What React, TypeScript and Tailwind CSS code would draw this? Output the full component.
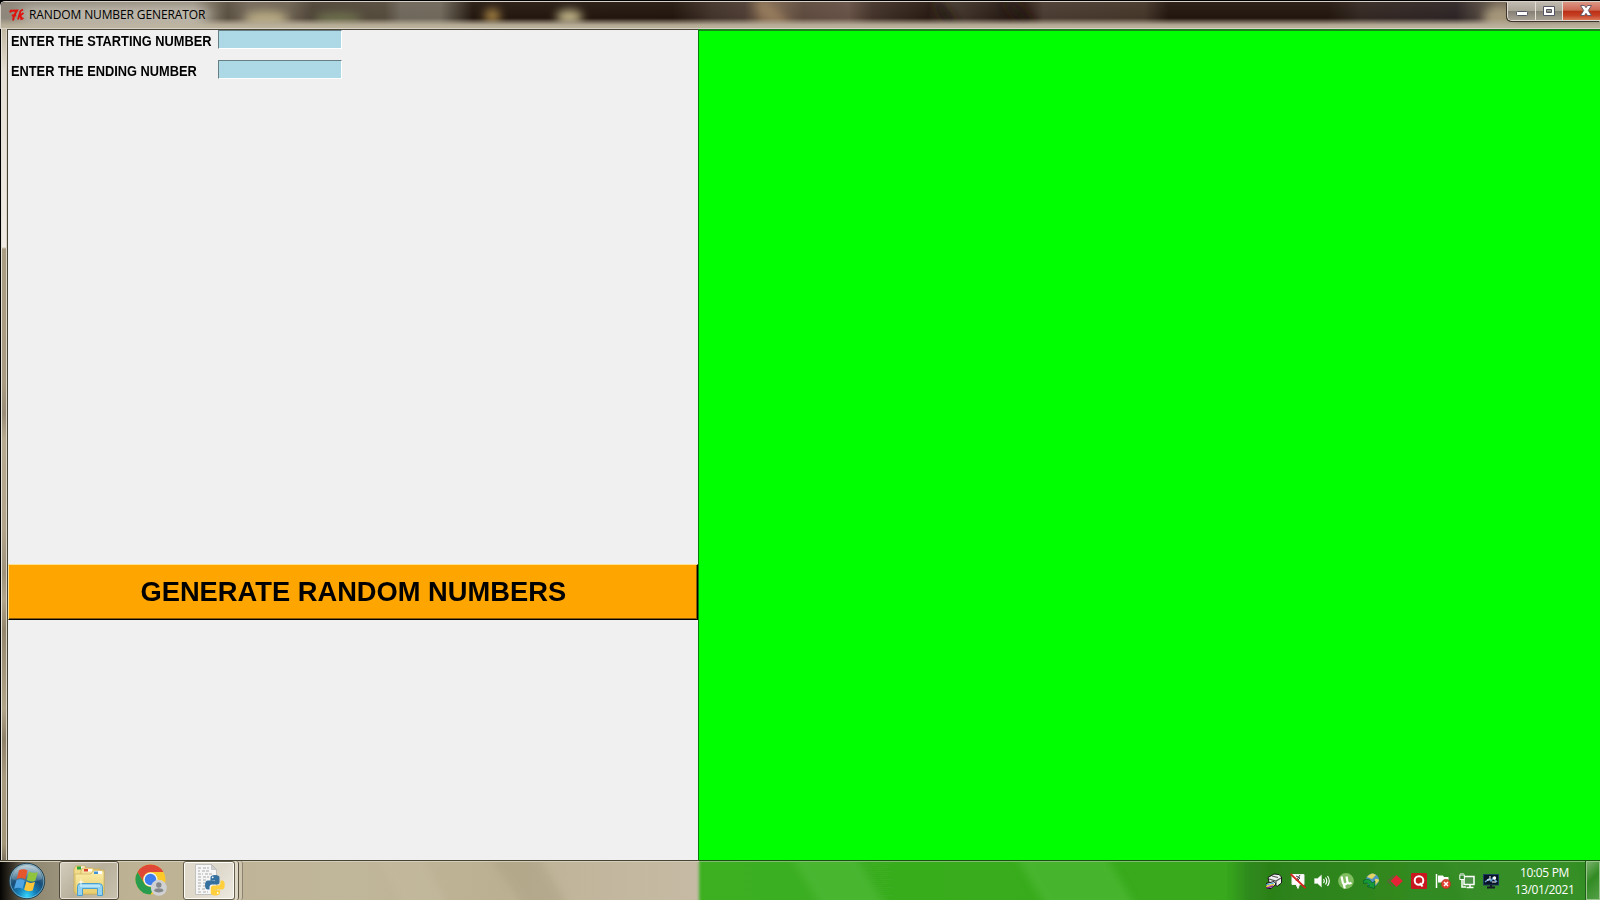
import type { ReactNode } from "react";

function TitleGlass() {
  return (
    <svg className="col-start-1 row-start-1 h-[26px] w-full" viewBox="0 0 1598 26" preserveAspectRatio="none" aria-hidden="true">
      <defs>
        <linearGradient id="glass" x1="0" x2="1598" y1="0" y2="0" gradientUnits="userSpaceOnUse">
          <stop offset="0" stopColor="#8d867a" />
          <stop offset="0.12" stopColor="#968f80" />
          <stop offset="0.132" stopColor="#756b5b" />
          <stop offset="0.142" stopColor="#5a5042" />
          <stop offset="0.155" stopColor="#74695a" />
          <stop offset="0.18" stopColor="#6d6252" />
          <stop offset="0.195" stopColor="#4d4337" />
          <stop offset="0.24" stopColor="#554b3d" />
          <stop offset="0.25" stopColor="#6e675b" />
          <stop offset="0.275" stopColor="#6f685b" />
          <stop offset="0.295" stopColor="#23170f" />
          <stop offset="0.42" stopColor="#21150d" />
          <stop offset="0.445" stopColor="#41322a" />
          <stop offset="0.465" stopColor="#4c3c33" />
          <stop offset="0.476" stopColor="#7a624b" />
          <stop offset="0.487" stopColor="#745e4b" />
          <stop offset="0.502" stopColor="#5d4a3e" />
          <stop offset="0.53" stopColor="#665146" />
          <stop offset="0.545" stopColor="#423229" />
          <stop offset="0.58" stopColor="#281a12" />
          <stop offset="0.592" stopColor="#463a30" />
          <stop offset="0.625" stopColor="#281c16" />
          <stop offset="0.64" stopColor="#2b1b14" />
          <stop offset="0.652" stopColor="#493b31" />
          <stop offset="0.715" stopColor="#443529" />
          <stop offset="0.73" stopColor="#21150e" />
          <stop offset="0.83" stopColor="#21150e" />
          <stop offset="0.85" stopColor="#332722" />
          <stop offset="0.91" stopColor="#2c2425" />
          <stop offset="0.935" stopColor="#6a5d4f" />
          <stop offset="1" stopColor="#8b8170" />
        </linearGradient>
        <linearGradient id="glassFade" x1="0" x2="0" y1="0" y2="1">
          <stop offset="0" stopColor="#b9af99" stopOpacity="0.08" />
          <stop offset="0.62" stopColor="#b9af99" stopOpacity="0" />
          <stop offset="0.88" stopColor="#b9af99" stopOpacity="0.95" />
          <stop offset="1" stopColor="#bdb49e" />
        </linearGradient>
        <filter id="soft" x="-80%" y="-100%" width="260%" height="300%"><feGaussianBlur stdDeviation="5" /></filter>
        <filter id="softWide" x="-20%" y="-100%" width="140%" height="300%"><feGaussianBlur stdDeviation="8 4" /></filter>
      </defs>
      <rect width="1598" height="26" fill="url(#glass)" />
      <g filter="url(#soft)">
        <ellipse cx="265" cy="17" rx="22" ry="8" fill="#b7aa83" />
        <ellipse cx="337" cy="17" rx="24" ry="6" fill="#6f7350" />
        <ellipse cx="491" cy="14" rx="8" ry="7" fill="#a98545" />
        <ellipse cx="568" cy="15" rx="13" ry="7" fill="#c5ba8c" />
        <path d="M752 0h16l20 22h-22z" fill="#957a5b" />
        <path d="M930 0h12l15 22h-15z" fill="#23170f" />
        <path d="M1000 0h15l20 22h-18z" fill="#23150f" />
        <ellipse cx="1498" cy="16" rx="16" ry="12" fill="#a49679" />
      </g>
      <rect width="1598" height="26" fill="url(#glassFade)" />
      <rect x="20" y="4" width="188" height="18" rx="8" fill="#cbc5b9" opacity="0.75" filter="url(#softWide)" />
    </svg>
  );
}

function TkIcon() {
  return (
    <svg className="h-4 w-4 shrink-0" viewBox="0 0 16 16" fill="none" stroke="#e0130d" strokeWidth="2" aria-hidden="true">
      <path d="M1 5.500 1.800 3.800 8 3.500 5 8.500 4 13.500M2.800 8.500h4.400" />
      <path d="M14 2.500 11.500 4 9 12.500M9.500 9.500 14.500 6M11.500 8.500l.8 3.500 2.200-.8" strokeWidth="1.900" />
    </svg>
  );
}

function WindowControls() {
  return (
    <div className="col-start-1 row-start-1 flex h-[19px] w-[93px] self-start justify-self-end rounded-bl-[5px] border-b border-l border-[#ded8ce] shadow-[-1px_1px_0_#3d352d]">
      <button aria-label="Minimize" className="flex w-[28px] items-center justify-center rounded-bl-[4px] border-r border-[#e5dfd4] bg-[linear-gradient(#c1bab0_0%,#aba499_48%,#857e74_50%,#a69f93_100%)]">
        <svg className="h-[18px] w-[14px]" viewBox="0 0 14 18"><rect x="1.500" y="9.500" width="11" height="4" rx="1" fill="#fff" stroke="#565566" /></svg>
      </button>
      <button aria-label="Maximize" className="flex w-[27px] items-center justify-center border-r border-[#e5dfd4] bg-[linear-gradient(#c1bab0_0%,#aba499_48%,#857e74_50%,#a69f93_100%)]">
        <svg className="h-[18px] w-[14px]" viewBox="0 0 14 18"><path fillRule="evenodd" d="M1.500 4.500h11v9h-11zM4.500 7.500v3h5v-3z" fill="#fff" stroke="#565566" /></svg>
      </button>
      <button aria-label="Close" className="flex flex-1 items-center justify-center bg-[linear-gradient(#dc9584_0%,#cd6853_46%,#b92f16_50%,#c64025_75%,#dc7756_100%)] pl-[9px]">
        <svg className="h-[18px] w-[14px] shrink-0" viewBox="0 0 14 18"><path d="M1.500 3.500h4L7 5.700l1.500-2.200h4L9.300 8.500l3.200 5h-4L7 11.300l-1.500 2.200h-4l3.200-5z" fill="#fff" stroke="#5c5060" strokeWidth="0.900" /></svg>
      </button>
    </div>
  );
}

function Field({ label }: { label: string }) {
  return (
    <label className="flex h-[30px] items-start">
      <span className="w-[210px] shrink-0 pl-[3px] pt-[1px] leading-[20px]">
        <span className="inline-block origin-left scale-x-[0.915] whitespace-nowrap">{label}</span>
      </span>
      <input className="block h-[19px] w-[124px] border-b border-l border-r border-t border-b-white border-l-[#667f85] border-r-white border-t-[#667f85] bg-[#add8e6] px-1 text-xs outline-none" />
    </label>
  );
}

function StartOrb() {
  return (
    <svg className="h-[38px] w-[38px]" viewBox="0 0 38 38" aria-hidden="true">
      <defs>
        <radialGradient id="orb" cx="50%" cy="92%" r="85%">
          <stop offset="0" stopColor="#35d5fb" />
          <stop offset="0.3" stopColor="#1680ba" />
          <stop offset="0.6" stopColor="#174d77" />
          <stop offset="1" stopColor="#668899" />
        </radialGradient>
        <linearGradient id="orbShine" x1="0" x2="0" y1="0" y2="1">
          <stop offset="0" stopColor="#e5f3f7" stopOpacity="0.7" />
          <stop offset="1" stopColor="#bddbe8" stopOpacity="0.15" />
        </linearGradient>
      </defs>
      <circle cx="19" cy="19" r="17.700" fill="url(#orb)" stroke="#1c3c4f" />
      <circle cx="19" cy="19" r="16.800" fill="none" stroke="#a9dcec" strokeOpacity="0.5" />
      <path d="M3.500 17C4.500 8 11 3 19 3s14.500 5 15.500 14c-8 4-22 4-31 0z" fill="url(#orbShine)" />
      <path d="M11 8.300c3-1.700 6-1.500 8.500.3l-2.300 8.800c-2.700-1.700-5.200-1.800-8.500-.3z" fill="#e6562c" />
      <path d="M20.900 9.500c2.900 1.600 5.900 1.600 8.900.4l-2.500 8.800c-2.900 1.400-5.800 1.100-8.600-.6z" fill="#91c43d" />
      <path d="M8.300 18.400c3.200-1.600 5.800-1.300 8.500.3l-2.200 8.300c-2.800-1.700-5.200-1.600-8.500-.3z" fill="#4fa4e4" />
      <path d="M18.300 19.600c2.900 1.600 5.700 1.700 8.700.5l-2.300 8.300c-3.100 1.300-5.900 1-8.600-.6z" fill="#fcc638" />
    </svg>
  );
}

function FolderIcon() {
  return (
    <svg className="h-[32px] w-[34px]" viewBox="0 0 34 32" aria-hidden="true">
      <defs><linearGradient id="folder" x1="0" x2="0" y1="0" y2="1"><stop stopColor="#fbedaa" /><stop offset="1" stopColor="#e8cd6b" /></linearGradient></defs>
      <path d="M2 4 4 1h9l2 3h13v23H2z" fill="#f2dc89" stroke="#c9aa51" strokeWidth="0.700" />
      <rect x="5" y="1.500" width="4" height="3" fill="#2aa637" /><rect x="9" y="1.500" width="3.500" height="3" fill="#fff" />
      <path d="M9 6 10 3h11l1 2h10v24H9z" fill="#f6e39b" stroke="#c9aa51" strokeWidth="0.700" />
      <rect x="12" y="4" width="8" height="2.500" fill="#fff" /><rect x="12" y="4" width="4" height="2.500" fill="#d9442d" />
      <path d="M3 9h16l2-3h11v23H3z" fill="url(#folder)" stroke="#cbb15b" strokeWidth="0.700" />
      <rect x="22" y="6" width="8" height="3" fill="#fff" /><rect x="22" y="6.500" width="4" height="2.500" fill="#4094d2" />
      <path d="M5.500 30.500v-9q0-3 3-3h18q4 0 4 3v9h-5v-7h-15v7z" fill="#93d3f1" stroke="#4ba0cf" />
      <path d="M8 20.500h20v1H8z" fill="#e4f7ff" />
      <path d="m9 13 .7 3.500L13 17l-3.300.7L9 21l-.7-3.300L5 17l3.300-.5z" fill="#fff" opacity="0.900" />
    </svg>
  );
}

function ChromeIcon() {
  return (
    <svg className="h-[32px] w-[32px]" viewBox="0 0 32 32" aria-hidden="true">
      <circle cx="15.500" cy="15.500" r="15" fill="#fbca2a" />
      <path d="M2.500 8A15 15 0 0 1 28.500 8h-13a7.500 7.500 0 0 0-6.600 11z" fill="#df4837" />
      <path d="M2.500 8a15 15 0 0 0 13 22.500L22 19.200A7.500 7.500 0 0 1 9 19z" fill="#299c4d" />
      <circle cx="15.500" cy="15.500" r="7" fill="#f1f3f3" /><circle cx="15.500" cy="15.500" r="5.700" fill="#3d7ded" />
      <circle cx="23.800" cy="23.800" r="8" fill="#d0d1d2" /><circle cx="23.800" cy="21" r="2.700" fill="#85888b" />
      <path d="M19 26.800c.2-3.300 9.400-3.300 9.600 0-2.500 2.200-7.100 2.200-9.600 0z" fill="#85888b" />
    </svg>
  );
}

function PythonFileIcon() {
  return (
    <svg className="h-[32px] w-[32px]" viewBox="0 0 32 32" aria-hidden="true">
      <path d="M2.500.5h16l5 5v25h-21z" fill="#f6f6f6" stroke="#c2c1bd" />
      <path d="M18.500.5v5h5z" fill="#d0d0d0" stroke="#aaa9a6" strokeWidth="0.500" />
      <path d="M5 4h3m2 0h6M5 7h2m2 0h7M5 10h5m2 0h8M5 13h3m2 0h6M5 16h3m2 0h3M5 19h3m2 0h2M5 22h4m1 0h2M5 25h2m2 0h4M5 28h4m1 0h5" stroke="#aaa" strokeDasharray="3 1" />
      <path d="M17.500 16.500v-3q0-2.500 4.500-2.500t4.500 2.500V18q0 2.500-2.500 2.500h-5q-2.500 0-2.500 3v2H15q-3 0-3-4.500t3-4.500h7V16z" fill="#35709e" />
      <circle cx="19.700" cy="13.300" r="0.900" fill="#fff" />
      <path d="M27.500 16.500h1.700q2.500 0 2.500 4.500t-3 4.500h-6v.7h4.300v2.500q0 2.700-4.600 2.700t-4.600-2.700V24q0-2.500 2.500-2.500h4.500q2.700 0 2.700-3z" fill="#ffcf3c" />
      <circle cx="24.700" cy="28.900" r="0.900" fill="#fff" />
    </svg>
  );
}

function TaskbarGlass() {
  return (
    <svg className="col-start-1 row-start-1 h-[38px] w-[1600px]" viewBox="0 0 1600 38" aria-hidden="true">
      <defs>
        <linearGradient id="beige" x1="0" x2="699" y1="0" y2="0" gradientUnits="userSpaceOnUse">
          <stop stopColor="#050402" /><stop offset="0.018" stopColor="#39342a" /><stop offset="0.045" stopColor="#8f8670" />
          <stop offset="0.08" stopColor="#9a917b" /><stop offset="0.16" stopColor="#bbb093" /><stop offset="0.19" stopColor="#beb294" /><stop offset="0.5" stopColor="#c0b699" />
          <stop offset="0.72" stopColor="#bcb092" /><stop offset="0.82" stopColor="#c1b69c" /><stop offset="1" stopColor="#c6baa4" />
        </linearGradient>
        <linearGradient id="green" x1="699" x2="1600" y1="0" y2="0" gradientUnits="userSpaceOnUse">
          <stop stopColor="#3cb022" /><stop offset="0.3" stopColor="#38ac1e" /><stop offset="0.585" stopColor="#37a91d" /><stop offset="0.61" stopColor="#2e8a1a" />
          <stop offset="0.635" stopColor="#2c8119" /><stop offset="0.8" stopColor="#318a20" /><stop offset="1" stopColor="#318e20" />
        </linearGradient>
        <filter id="edge" x="-5%" y="-50%" width="110%" height="200%"><feGaussianBlur stdDeviation="1.500 0" /></filter>
        <filter id="streak" x="-30%" y="-60%" width="160%" height="220%"><feGaussianBlur stdDeviation="5 1" /></filter>
      </defs>
      <rect width="1600" height="38" fill="url(#beige)" />
      <path d="M486-10h50l35 58h-45z" fill="#aca083" opacity="0.500" filter="url(#streak)" />
      <path d="M375-10h45l30 58h-45z" fill="#c7bda3" opacity="0.400" filter="url(#streak)" />
      <rect x="699" y="-5" width="920" height="50" fill="url(#green)" filter="url(#edge)" />
      <g fill="#54bd3c" opacity="0.550" filter="url(#streak)">
        <path d="M788-10h65l35 58h-65z" /><path d="M1013-10h90l35 58h-90z" />
      </g>
      <path d="M1440-10h130l20 58h-120z" fill="#4a993b" opacity="0.200" filter="url(#streak)" />
    </svg>
  );
}

function TrayIcon({ children, label }: { children: ReactNode; label: string }) {
  return <svg className="h-4 w-4 shrink-0" viewBox="0 0 16 16" role="img" aria-label={label}>{children}</svg>;
}

function Tray() {
  return (
    <div className="flex items-center gap-[8.100px]">
      <TrayIcon label="Printer">
        <path d="M2 4.500 8 1l5 .5L15.500 4v6l-4 3-8-2z" fill="#eee" stroke="#181818" />
        <path d="m3 6 7 2 5-3M6 3l6 1.500M10 8v5" stroke="#555" fill="none" strokeWidth="1.200" />
        <path d="m0 10.500 8-2 2 2.500-5 4.500H1z" fill="#f7f7f7" stroke="#151515" />
        <path d="m0 12 8-2" stroke="#39a8e2" strokeWidth="1.200" /><path d="m0 13.500 8-2" stroke="#e4c62b" strokeWidth="1.300" /><path d="m1 15 6-2" stroke="#872d97" strokeWidth="1.800" />
      </TrayIcon>
      <TrayIcon label="Messages disabled">
        <path d="M2 1.500h12v10H9.500l-1.500 4-2-4H2z" fill="#fff" stroke="#eee" /><path d="m6 3 4 2-2 2 2 3M10 2 6 8" fill="none" stroke="#444" />
        <path d="M.5 1 15.500 15" stroke="#d62420" strokeWidth="1.900" />
      </TrayIcon>
      <TrayIcon label="Volume">
        <path d="M.5 5.500h3L7.500 2v12l-4-3.500h-3z" fill="#fff" stroke="#c9ddc4" strokeWidth="0.500" />
        <path d="M9.500 6q1.500 2 0 4M11.500 4.500q2.500 3.500 0 7M13.500 3q3.500 5 0 10" fill="none" stroke="#fff" strokeWidth="1.200" />
      </TrayIcon>
      <TrayIcon label="Torrent">
        <circle cx="8" cy="8" r="7.900" fill="#80bd60" />
        <path d="m3.500 3.500 1.300 6q.7 2.500 2.700 1.700T9.500 9L8.500 3.500M9.500 9q1 2.500 4 .8M5.500 10l1.300 5.500" fill="none" stroke="#fff" strokeWidth="2.200" />
      </TrayIcon>
      <TrayIcon label="Download manager">
        <circle cx="9.500" cy="7" r="6.500" fill="#4f92c2" /><path d="M4 4q5-6 9-2L9 6zM12 6q4-1 4 2l-4 4z" fill="#e3d360" />
        <path d="M.5 7.500q6-3.500 8.500 2.500l3-2-.5 7.500-7.500-2 2.500-1.500Q4.500 8.500.5 10.500z" fill="#179b38" stroke="#075b2b" strokeWidth="0.700" />
      </TrayIcon>
      <TrayIcon label="Capture">
        <path d="M7 2.500.8 8 6 13.500" fill="none" stroke="#6a5c42" strokeWidth="1.200" /><path d="M9.500 2 15.800 8 9.500 14 3.500 8z" fill="#e52236" />
      </TrayIcon>
      <TrayIcon label="Antivirus">
        <rect width="16" height="16" rx="1" fill="#c91720" /><circle cx="8" cy="7.500" r="4.300" fill="none" stroke="#fff" strokeWidth="2" /><path d="m9 10 2.500 3.500" stroke="#fff" strokeWidth="2" />
      </TrayIcon>
      <TrayIcon label="Action center">
        <path d="M1.500 1v14" stroke="#fff" strokeWidth="1.500" /><path d="M3 2.500h5l1 1.500h4.500v6H8L7 9.500H3z" fill="#fff" />
        <circle cx="11" cy="11" r="4.700" fill="#df4130" stroke="#a52c22" strokeWidth="0.500" /><path d="m9 9 4 4m0-4-4 4" stroke="#fff" strokeWidth="1.500" />
      </TrayIcon>
      <TrayIcon label="Network">
        <rect x="5" y="3.500" width="10" height="8" fill="#4f9349" stroke="#fff" strokeWidth="1.500" /><path d="M7.500 14.500h7M11 12v2M3 7v7h4" stroke="#fff" fill="none" strokeWidth="1.500" />
        <path d="M.8 1.500v5h4.500v-5M2 0v3M4 0v3" fill="#31852b" stroke="#fff" />
      </TrayIcon>
      <TrayIcon label="Graphics">
        <rect x=".5" y="1.500" width="15" height="10.500" fill="#081326" stroke="#1d3b60" /><path d="M4 14.500h8M8 12v3" stroke="#151c26" strokeWidth="2" />
        <path d="m2 9 4-3 2 2 2-3 4 4" fill="none" stroke="#689ed0" strokeWidth="1.500" /><circle cx="11.500" cy="5" r="1.700" fill="#fff" /><path d="M7 3v4M4 7h2M9 9h4" stroke="#fff" />
      </TrayIcon>
    </div>
  );
}

function Taskbar() {
  return (
    <footer className="grid h-[40px] shrink-0 grid-cols-[1600px] grid-rows-[38px] bg-[linear-gradient(90deg,#484432_0_699px,#17520f_699px)] pt-px">
      <div className="col-start-1 row-start-1 h-[39px] bg-[linear-gradient(90deg,#d4cdbb_0_699px,#7fbe72_699px)] pt-px"><TaskbarGlass /></div>
      <div className="relative col-start-1 row-start-1 flex h-[39px] items-stretch">
        <button aria-label="Start" className="ml-[8px] flex h-[39px] w-[38px] items-center"><StartOrb /></button>
        <button aria-label="Explorer" className="ml-[13px] flex w-[60px] items-center justify-center rounded-[3px] border border-[#514a3b] bg-[linear-gradient(135deg,#d3cdbd,#b8b09b_50%,#c9c2af)] shadow-[inset_0_0_0_1px_#e7e1d5]"><FolderIcon /></button>
        <button aria-label="Chrome" className="ml-[15px] flex w-[34px] items-center justify-center pb-px"><ChromeIcon /></button>
        <button aria-label="Python" className="ml-[15px] flex w-[52px] items-center justify-center rounded-[3px] border border-[#655e4f] bg-[linear-gradient(135deg,#e0dacd,#dfd9cc_50%,#eeeae1)] pb-0.5 shadow-[inset_0_0_0_1px_#fffdf5]"><PythonFileIcon /></button>
        <span className="w-[4px] rounded-r-[3px] border-r border-[#595243] bg-[#dfd7c5]" />
        <span className="w-[4px] rounded-r-[3px] border-r border-[#8b8371] bg-[#cfc5ad]" />
        <div className="ml-auto flex items-center">
          <Tray />
          <div className="ml-[11.500px] h-[34px] w-[68px] text-center font-['Open_Sans','Noto_Sans',sans-serif] text-[12px] leading-[17px] tracking-[-0.350px] text-white"><div>10:05 PM</div><div>13/01/2021</div></div>
          <button aria-label="Show desktop" className="ml-[7.500px] h-[39px] w-[14px] border border-[#9ac68e] bg-[linear-gradient(135deg,#79b36c,#328b23_45%,#54a047)] shadow-[-1px_0_0_#215e18]" />
        </div>
      </div>
    </footer>
  );
}

export default function App() {
  return (
    <div className="flex h-[900px] w-[1600px] flex-col overflow-hidden bg-black font-['Liberation_Sans',Arial,sans-serif] text-black">
      <main className="flex h-[860px] flex-col pt-px">
        <header className="grid h-[28px] shrink-0 grid-cols-1 grid-rows-[26px] overflow-hidden rounded-tl-[5px] border-b border-l border-t border-[#d7d1c8]">
          <TitleGlass />
          <div className="relative col-start-1 row-start-1 flex h-[26px] items-center gap-[4px] pl-[8px]">
            <TkIcon />
            <h1 className="font-['Open_Sans','Noto_Sans',sans-serif] text-[12px] leading-[26px] tracking-[-0.120px]">RANDOM NUMBER GENERATOR</h1>
          </div>
          <WindowControls />
        </header>
        <div className="flex h-[831px]">
          <div className="flex w-[8px] shrink-0 border-l border-l-black">
            <div className="w-px bg-[#e6dfd4]" />
            <div className="w-[4px] bg-[linear-gradient(#c2b9a3_0px,#e5e0d5_45px,#efebe4_218px,#a99d83_220px,#a99c82_355px,#998d78_385px,#b6aa90_410px,#b2a58b_500px,#9f927c_545px,#b1a58c_570px,#94866c_600px,#b1a58a_680px,#8e8169_710px,#a99b80_750px,#a39779_815px,#7e735f_831px)]" />
            <div className="w-px bg-[#dad3c6]" /><div className="w-px bg-[#464233]" />
          </div>
          <section className="flex w-[690px] shrink-0 flex-col border-t border-[#4b4838] bg-[#f0f0f0] text-[14px] font-bold">
            <Field label="ENTER THE STARTING NUMBER" />
            <Field label="ENTER THE ENDING NUMBER" />
            <button className="mt-[474px] flex h-[56px] w-full items-center justify-center border-b border-l border-r border-t border-b-black border-l-[#ffe28f] border-r-black border-t-[#ffe28f] bg-[#ffa500] pb-px text-[28px] font-bold leading-[54px] shadow-[inset_-1px_-1px_0_#875b0b]">
              <span className="inline-block scale-x-[0.975] whitespace-nowrap">GENERATE RANDOM NUMBERS</span>
            </button>
          </section>
          <section aria-label="Results" className="flex-1 border-l border-t-2 border-l-[#087b08] border-t-[#18831b] bg-[#00ff00]" />
        </div>
      </main>
      <Taskbar />
    </div>
  );
}
